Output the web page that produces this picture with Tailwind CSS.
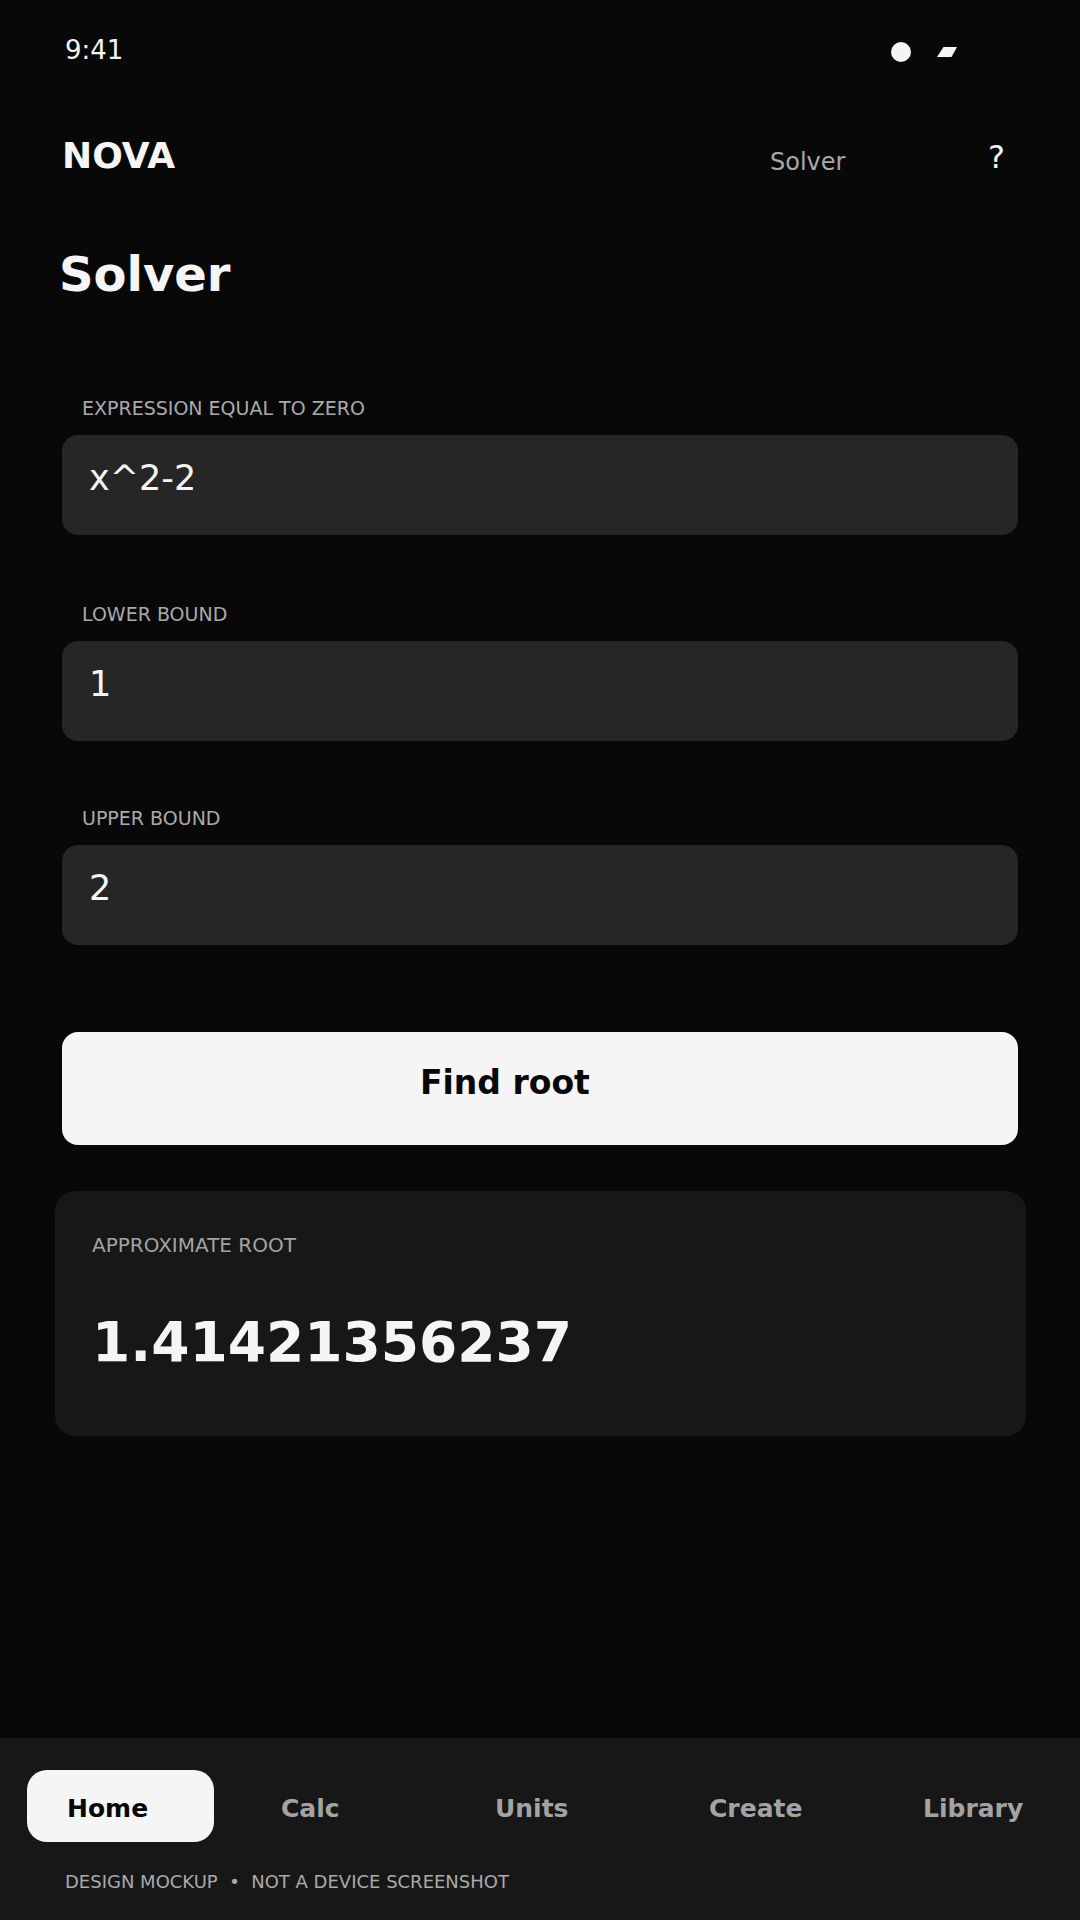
<!DOCTYPE html>
<html lang="en">
<head>
    <meta charset="UTF-8">
    <meta name="viewport" content="width=device-width, initial-scale=1.0">
    <title>Solver - Nova</title>
    <script src="https://cdn.jsdelivr.net/npm/@tailwindcss/browser@4"></script>
</head>
<body class="bg-[#080808] text-[#f5f5f5] font-['DejaVu_Sans',sans-serif]">
<div class="flex flex-col w-[1080px] h-[1920px] overflow-hidden">

    <!-- Status bar -->
    <div class="flex items-center h-[100px] pl-[65px]">
        <span class="text-[26px] leading-[30px]">9:41</span>
        <svg class="ml-[768px] mt-[3px]" width="66" height="20" viewBox="0 0 66 20" fill="#f5f5f5">
            <circle cx="10" cy="10" r="10"/>
            <polygon points="46,15 52.5,5 66,5 60.5,15"/>
        </svg>
    </div>

    <!-- App bar -->
    <div class="flex items-start h-[100px] pl-[62px]">
        <span class="mt-[35px] w-[708px] text-[36px] leading-[42px] font-bold">NOVA</span>
        <span class="mt-[48px] w-[218px] text-[24px] leading-[28px] text-[#a8a8a8]">Solver</span>
        <span class="mt-[39px] text-[32px] leading-[37px]">?</span>
    </div>

    <h1 class="mt-[46px] pl-[59px] text-[48px] leading-[56px] font-bold">Solver</h1>

    <!-- Fields -->
    <div class="flex flex-col px-[62px] mt-[95px]">
        <label class="pl-[20px] text-[19px] leading-[22px] text-[#aaaaaa]">EXPRESSION EQUAL TO ZERO</label>
        <div class="mt-[16px] h-[100px] rounded-[16px] bg-[#262626] pl-[27px] pt-[23px] text-[35px] leading-[41px]">x^2-2</div>

        <label class="mt-[68px] pl-[20px] text-[19px] leading-[22px] text-[#aaaaaa]">LOWER BOUND</label>
        <div class="mt-[16px] h-[100px] rounded-[16px] bg-[#262626] pl-[27px] pt-[23px] text-[35px] leading-[41px]">1</div>

        <label class="mt-[66px] pl-[20px] text-[19px] leading-[22px] text-[#aaaaaa]">UPPER BOUND</label>
        <div class="mt-[16px] h-[100px] rounded-[16px] bg-[#262626] pl-[27px] pt-[23px] text-[35px] leading-[41px]">2</div>

        <button class="mt-[87px] h-[113px] rounded-[16px] bg-[#f5f5f5] pl-[358px] pb-[12px] text-left text-[33px] leading-[39px] font-bold text-[#080808]">Find root</button>
    </div>

    <!-- Result -->
    <div class="mt-[46px] mx-[55px] w-[971px] h-[245px] rounded-[20px] bg-[#171717] pl-[37px] pt-[43px]">
        <p class="text-[20px] leading-[23px] text-[#a3a3a3]">APPROXIMATE ROOT</p>
        <p class="mt-[53px] text-[55px] leading-[65px] font-bold">1.41421356237</p>
    </div>

    <!-- Bottom nav -->
    <div class="mt-auto h-[182px] bg-[#171717]">
        <div class="flex items-center pt-[32px] pl-[27px]">
            <span class="w-[187px] h-[72px] rounded-[20px] bg-[#f5f5f5] pl-[40px] pt-[24px] text-[25px] leading-[29px] font-bold text-[#080808]">Home</span>
            <span class="ml-[67px] mt-[5px] w-[214px] text-[25px] leading-[29px] font-bold text-[#a3a3a3]">Calc</span>
            <span class="mt-[5px] w-[214px] text-[25px] leading-[29px] font-bold text-[#a3a3a3]">Units</span>
            <span class="mt-[5px] w-[214px] text-[25px] leading-[29px] font-bold text-[#a3a3a3]">Create</span>
            <span class="mt-[5px] text-[25px] leading-[29px] font-bold text-[#a3a3a3]">Library</span>
        </div>
        <p class="mt-[29px] pl-[65px] text-[18px] leading-[21px] text-[#aaaaaa]">DESIGN MOCKUP &nbsp;•&nbsp; NOT A DEVICE SCREENSHOT</p>
    </div>
</div>
</body>
</html>
